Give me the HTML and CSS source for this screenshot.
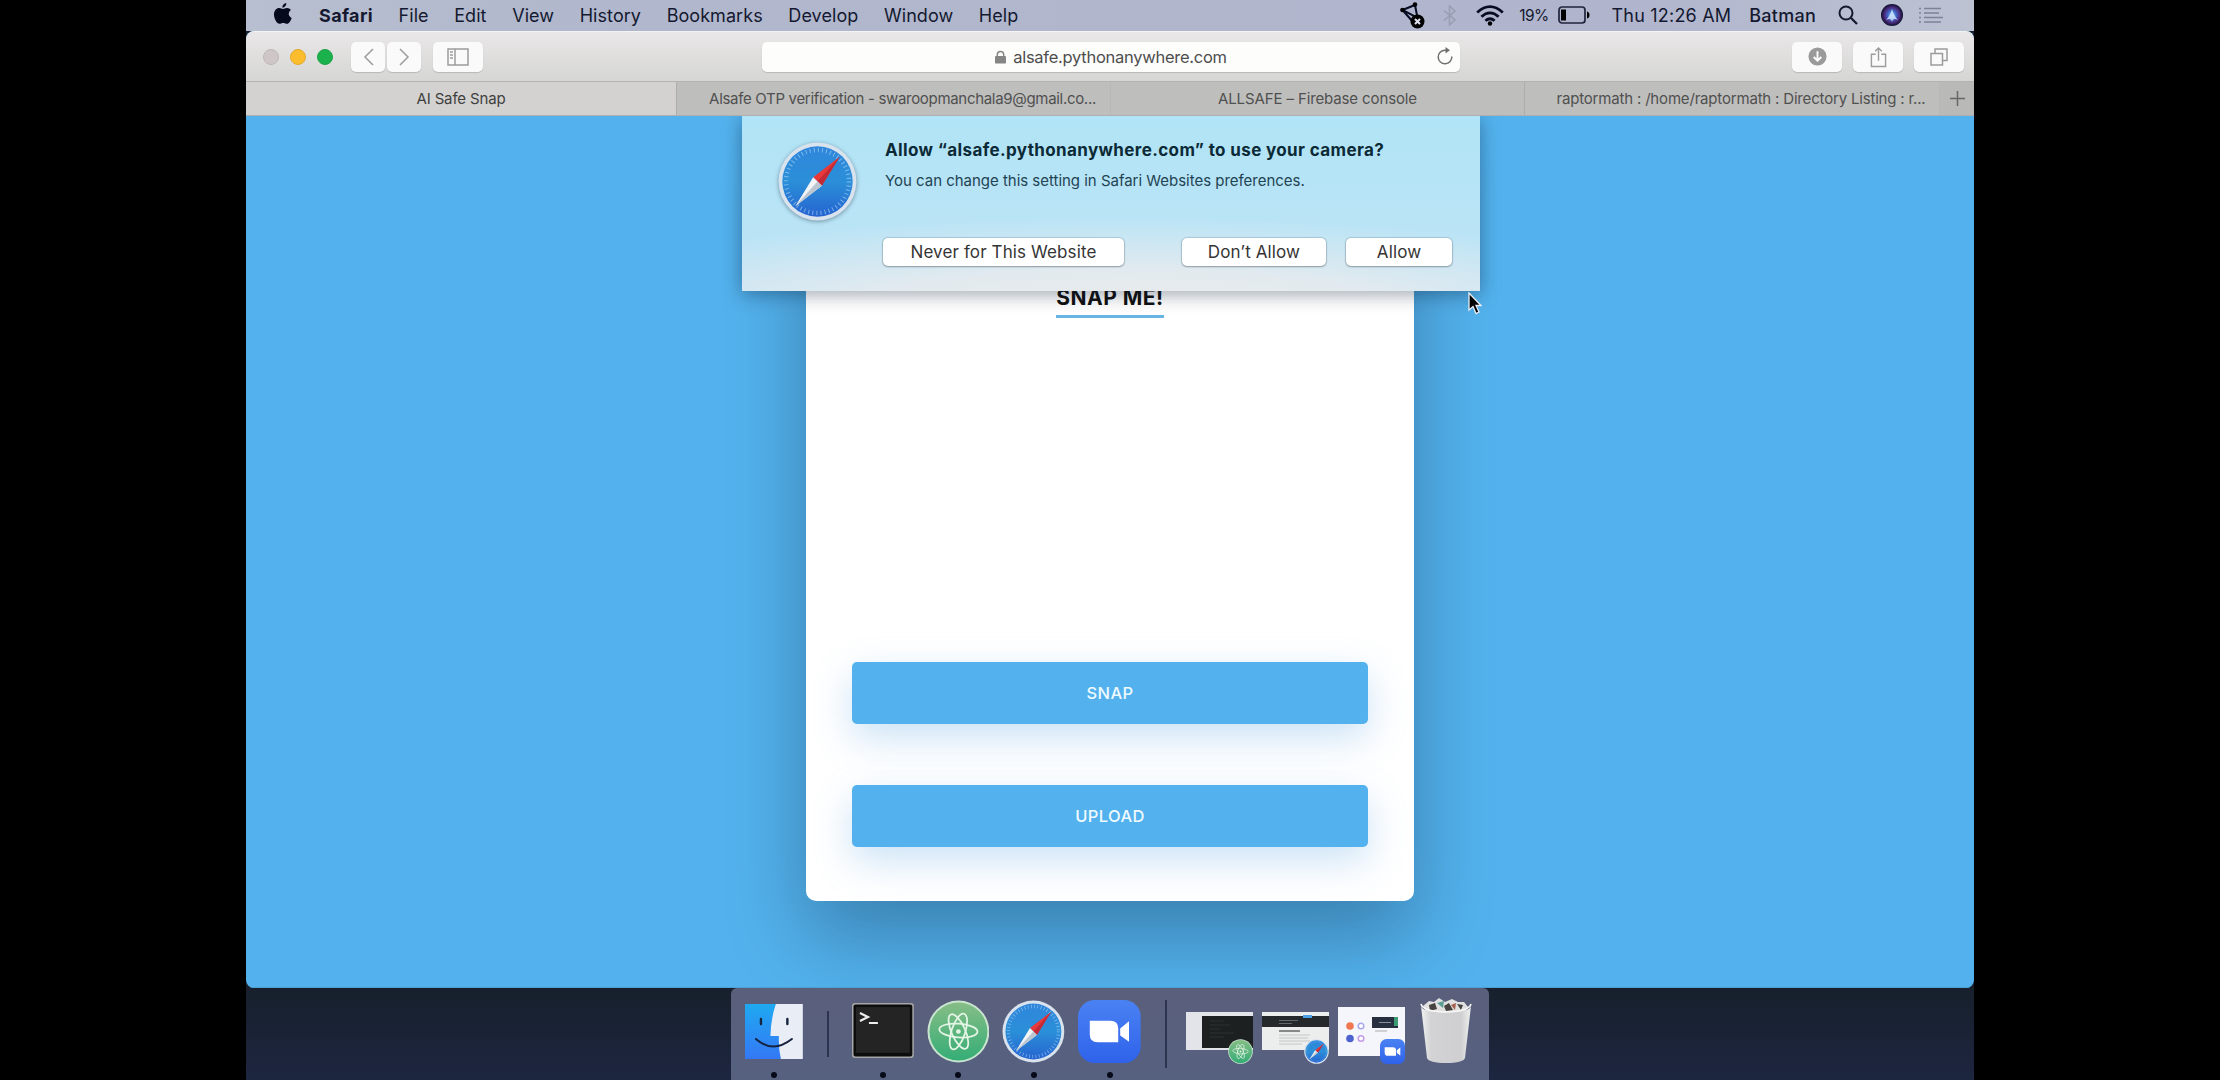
FILE: index.html
```html
<!DOCTYPE html>
<html lang="en">
<head>
<meta charset="utf-8">
<title>AI Safe Snap</title>
<link rel="stylesheet" href="styles.css">
</head>
<body>
<svg class="defs" width="0" height="0" aria-hidden="true">
  <defs>
    <linearGradient id="sky" x1="0" y1="0" x2="0" y2="1"><stop offset="0" stop-color="#2f86dc"/><stop offset=".5" stop-color="#2b8fd8"/><stop offset="1" stop-color="#2563d0"/></linearGradient>
    <linearGradient id="leaf" x1="0" y1="0" x2="0" y2="1"><stop offset="0" stop-color="#86bd86"/><stop offset="1" stop-color="#35ad76"/></linearGradient>
    <linearGradient id="faceBlue" x1="0" y1="0" x2="0" y2="1"><stop offset="0" stop-color="#1fa9f1"/><stop offset="1" stop-color="#3478f5"/></linearGradient>
    <linearGradient id="zoomBlue" x1="0" y1="0" x2="0" y2="1"><stop offset="0" stop-color="#4a82f3"/><stop offset="1" stop-color="#2f62ea"/></linearGradient>
    <linearGradient id="bin" x1="0" y1="0" x2="1" y2="0"><stop offset="0" stop-color="#f2f2f2"/><stop offset=".2" stop-color="#d3d3d5"/><stop offset=".8" stop-color="#cfcfd1"/><stop offset="1" stop-color="#f0f0f0"/></linearGradient>
    <radialGradient id="siri"><stop offset="0" stop-color="#7fc4f0"/><stop offset=".4" stop-color="#3f63c4"/><stop offset=".7" stop-color="#4b2a7c"/><stop offset="1" stop-color="#0c0f2b"/></radialGradient>
    <symbol id="compass" viewBox="0 0 64 64">
      <circle cx="32" cy="32" r="31.5" fill="#d9e3ee"/>
      <circle cx="32" cy="32" r="28.5" fill="url(#sky)"/>
      <circle cx="32" cy="32" r="25.5" fill="none" stroke="#a9d4f5" stroke-width="3.5" stroke-dasharray=".8 2.54" opacity=".65"/>
      <path d="M50 12 35.5 35.5 28.5 28.5Z" fill="#e8383a"/>
      <path d="M50 12 35.5 35.5 32 32Z" fill="#c22a36"/>
      <path d="M14 52 28.5 28.5 35.5 35.5Z" fill="#f2f4f6"/>
      <path d="M14 52 32 32 35.5 35.5Z" fill="#bcc6d0"/>
    </symbol>
    <symbol id="atom" viewBox="0 0 64 64">
      <circle cx="32" cy="32" r="31.5" fill="#c9e5cf"/><circle cx="32" cy="32" r="29.5" fill="url(#leaf)"/>
      <g fill="none" stroke="#e4f5e6" stroke-width="1.8">
        <ellipse cx="32" cy="31" rx="19.5" ry="7" transform="rotate(4 32 31)"/>
        <ellipse cx="32" cy="32" rx="19" ry="7" transform="rotate(66 32 32)"/>
        <ellipse cx="32" cy="32" rx="19" ry="7" transform="rotate(-72 32 32)"/>
      </g><circle cx="32" cy="32" r="2.4" fill="#e4f5e6"/>
    </symbol>
    <symbol id="meet" viewBox="0 0 64 64">
      <rect width="64" height="64" rx="17" fill="url(#zoomBlue)"/>
      <path d="M12 21H33Q41 21 41 29V43H20Q12 43 12 35ZM43 29 52 21.500V42.500L43 36Z" fill="#fff"/>
    </symbol>
  </defs>
</svg>
<div class="screen">
  <header class="menubar">
    <svg class="apple" viewBox="0 0 18 21"><path d="M12.300 0C12.500 2.500 10.500 4.800 8.400 4.700 8.200 2.400 10.200.2 12.300 0ZM9 5.900C10 5.900 11 4.900 13 4.900 14.600 4.900 16 5.700 17 7 13.700 9 14.200 13.500 17.700 14.900 16.800 17.600 14.900 20.700 13 20.800 11.600 20.800 11 20 9.200 20 7.400 20 6.700 20.800 5.500 20.800 2.800 20.800 0 15.500 0 11.500 0 7.400 2.500 5 5.200 5 6.800 5 8 5.900 9 5.900Z"/></svg>
    <nav class="menus">
      <b>Safari</b><span>File</span><span>Edit</span><span>View</span><span>History</span><span>Bookmarks</span><span>Develop</span><span>Window</span><span>Help</span>
    </nav>
    <div class="status">
      <svg class="st-net" viewBox="0 0 25 27"><path d="M2.500 8 15 3 17.500 16ZM2.500 8 13 20" fill="none" stroke="#080c22" stroke-width="2"/><circle cx="2.500" cy="8" r="2.300"/><circle cx="15" cy="2.500" r="2.300"/><circle cx="17.500" cy="19.500" r="7"/><path d="M15 17 20 22M20 17 15 22" stroke="#dfe2ee" stroke-width="2"/></svg>
      <svg class="st-bt" viewBox="0 0 13 21"><path d="M1 5.500 12 15 6.500 20V1L12 6 1 15.500" fill="none" stroke="#979db2" stroke-width="1.500"/></svg>
      <svg class="st-wifi" viewBox="0 0 28 21"><g fill="none" stroke="#080c22" stroke-width="2.800"><path d="M1.200 7.500Q14-4.200 26.800 7.500"/><path d="M5.400 11.800Q14 4 22.600 11.800"/><path d="M9.400 15.800Q14 11.700 18.600 15.800"/></g><circle cx="14" cy="18.500" r="2.200"/></svg>
      <span class="pct">19%</span>
      <svg class="st-bat" viewBox="0 0 32 18"><rect x="1" y="1" width="26" height="16" rx="3" fill="none" stroke="#20253b" stroke-width="1.700"/><rect x="3" y="3.500" width="5" height="11"/><path d="M29 5.500Q31.500 6 31.500 9T29 12.500Z"/></svg>
      <span class="clock">Thu 12:26 AM</span>
      <span class="user">Batman</span>
      <svg class="st-find" viewBox="0 0 20 20"><circle cx="8" cy="8" r="6.500" fill="none" stroke="#151a30" stroke-width="2"/><path d="M12.800 12.800 19 19" stroke="#151a30" stroke-width="2.300"/></svg>
      <svg class="st-siri" viewBox="0 0 22 22"><circle cx="11" cy="11" r="11" fill="url(#siri)"/><path d="M5 16Q9 12 11 5 13 12 17 16 12 13 11 18 10 13 5 16" fill="#d7e9ff" opacity=".8"/></svg>
      <svg class="st-list" viewBox="0 0 24 16"><path d="M0 1.500H2M5 1.500H22M0 6H2M5 6H20M0 10.500H2M5 10.500H24M0 15H2M5 15H22" stroke="#7c8297" stroke-width="1.700"/></svg>
    </div>
  </header>
  <main class="window">
    <div class="toolbar">
      <div class="lights"><i></i><i class="amber"></i><i class="green"></i></div>
      <div class="history">
        <button class="tb nav"><svg width="11" height="18" viewBox="0 0 11 18"><path d="M10 1 2 9 10 17"/></svg></button>
        <button class="tb nav"><svg width="11" height="18" viewBox="0 0 11 18"><path d="M1 1 9 9 1 17"/></svg></button>
      </div>
      <button class="tb side"><svg width="22" height="18" viewBox="0 0 22 18"><path d="M1 1H21V17H1ZM8 1V17M3 4H6M3 7H6M3 10H6"/></svg></button>
      <div class="url">
        <svg class="lock" viewBox="0 0 12 14"><rect y="6" width="12" height="8" rx="1" fill="#858585"/><path d="M2.500 7V4.500A3.500 3.500 0 0 1 9.500 4.500V7" fill="none" stroke="#858585" stroke-width="1.600"/></svg>
        <span>alsafe.pythonanywhere.com</span>
        <svg class="reload" viewBox="0 0 16 18"><path d="M14.800 9.500A6.800 6.800 0 1 1 8 3.200H11" fill="none" stroke="#717171" stroke-width="1.500"/><path d="M8.500 0 13 3.300 8.500 6.600Z" fill="#717171"/></svg>
      </div>
      <div class="actions">
        <button class="tb"><svg width="19" height="19" viewBox="0 0 20 20"><circle cx="10" cy="10" r="9.500" fill="#9a9a9a" stroke="none"/><path class="arrow" d="M10 4.500V14M6 10.500 10 14.500 14 10.500"/></svg></button>
        <button class="tb"><svg width="17" height="22" viewBox="0 0 18 22"><path d="M6 8H1.500V21H16.500V8H12M9 15V1.500M5.500 5 9 1.500 12.500 5"/></svg></button>
        <button class="tb"><svg width="18" height="18" viewBox="0 0 18 18"><path d="M1 5.500H12.500V17H1ZM5 5V1H17V12.500H13"/></svg></button>
      </div>
    </div>
    <div class="tabs">
      <div class="tab active">AI Safe Snap</div>
      <div class="tab mail">Alsafe OTP verification - swaroopmanchala9@gmail.co...</div>
      <div class="tab fire">ALLSAFE – Firebase console</div>
      <div class="tab dir">raptormath : /home/raptormath : Directory Listing : r...</div>
      <div class="newtab"><svg width="15" height="15" viewBox="0 0 15 15"><path d="M7.500 0V15M0 7.500H15" stroke="#666" stroke-width="1.500"/></svg></div>
    </div>
    <div class="page">
      <section class="card">
        <h1>SNAP ME!</h1>
        <button class="cta">SNAP</button>
        <button class="cta">UPLOAD</button>
      </section>
      <aside class="sheet">
        <svg class="sheet-icon"><use href="#compass"/></svg>
        <div class="sheet-body">
          <h2>Allow “alsafe.pythonanywhere.com” to use your camera?</h2>
          <p>You can change this setting in Safari Websites preferences.</p>
          <div class="choices">
            <button class="never">Never for This Website</button>
            <button class="deny">Don’t Allow</button>
            <button class="allow">Allow</button>
          </div>
        </div>
      </aside>
    </div>
  </main>
  <footer class="dock">
    <div class="app finder on"><svg viewBox="0 0 58 55"><path d="M0 0H58V55H0Z" fill="#e9edf5"/><path d="M0 0H31Q26 14 25.500 32H34Q33.500 45 36 55H0Z" fill="url(#faceBlue)"/><path d="M16 15V20M42.500 15V20" stroke="#15233f" stroke-width="2.400" stroke-linecap="round"/><path d="M11 35Q28 50 47 35" fill="none" stroke="#15233f" stroke-width="2" stroke-linecap="round"/></svg></div>
    <i class="rule short"></i>
    <div class="app term on"><svg viewBox="0 0 62 55"><rect width="62" height="55" rx="3" fill="#a7a6a6"/><rect x="1.500" y="1.500" width="59" height="52" rx="2" fill="#0d0d0d"/><rect x="4" y="4" width="54" height="46" fill="#242424"/><path d="M8 10 16 14 8 18M17 20H26" fill="none" stroke="#eee" stroke-width="2.200"/></svg></div>
    <div class="app disc on"><svg><use href="#atom"/></svg></div>
    <div class="app disc on"><svg><use href="#compass"/></svg></div>
    <div class="app disc on"><svg><use href="#meet"/></svg></div>
    <i class="rule tall"></i>
    <div class="thumb"><svg viewBox="0 0 67 38"><path d="M0 0H67V38H0Z" fill="#e3e4ea"/><path d="M16 4H67V36H16Z" fill="#1d2021"/><path d="M24 9H38M24 13H44M24 17H34M24 21H48M24 25H38" stroke="#2b3031"/></svg><svg class="badge"><use href="#atom"/></svg></div>
    <div class="thumb"><svg viewBox="0 0 67 38"><path d="M0 0H67V38H0Z" fill="#eceded"/><path d="M0 4H67V15H0Z" fill="#26292c"/><path d="M41 3H50V6H41Z" fill="#4aa1e6"/><path d="M17 8.500H36M17 11.500H30" stroke="#63666a"/><path d="M17 19H38" stroke="#666" stroke-width="1.500"/><path d="M17 23H48M17 26H46M17 29H48M17 32H40" stroke="#c6c6c6"/></svg><svg class="badge"><use href="#compass"/></svg></div>
    <div class="thumb big"><svg viewBox="0 0 67 49"><path d="M0 0H67V49H0Z" fill="#f5f6fc"/><circle cx="12" cy="19" r="3.800" fill="#ef7850"/><circle cx="23" cy="19" r="2.800" fill="#fff" stroke="#a7a9ec" stroke-width="1.500"/><circle cx="12" cy="31.500" r="3.800" fill="#4b62cf"/><circle cx="23" cy="31.500" r="2.800" fill="#fff" stroke="#c39be8" stroke-width="1.500"/><path d="M34 10H60V21H34Z" fill="#263041"/><path d="M56 10H60V19H56Z" fill="#3b9b72"/><path d="M41 15.500H53" stroke="#8791a0"/><path d="M37 24H49" stroke="#aaa"/></svg><svg class="badge sq"><use href="#meet"/></svg></div>
    <svg class="trash" viewBox="0 0 52 67"><path d="M3 9 9 4 14 5 19 1 25 5 32 2 38 5 44 5 48 10 44 17H8Z" fill="#dfe0df"/><path d="M9 8 15 6 17 12 10 14ZM24 9 29 6 33 13 26 14ZM37 7 43 8 41 13Z" fill="#47413f"/><path d="M17 6 24 4 23 11Z" fill="#5b9c94"/><path d="M31 8 36 6 35 13Z" fill="#a55d4e"/><path d="M1 9Q2 15 26 15.500 50 15 51 9L45 61Q43 66 26 66T7 61Z" fill="url(#bin)"/><path d="M1 7Q3 14.500 26 15 49 14.500 51 7" fill="none" stroke="#f7f7f7" stroke-width="1.600"/></svg>
  </footer>
  <svg class="pointer" viewBox="0 0 14 23"><path d="M1 1V18L5 14.500 8 21.500 11 20 8 13.500H13Z" fill="#050505" stroke="#e8eef4" stroke-width="1.300"/></svg>
</div>
</body>
</html>
```
FILE: styles.css
```css
* { box-sizing: border-box; }
body { margin: 0; background: #000; font-family: Inter, "Liberation Sans", sans-serif; display: flex; justify-content: center; height: 1080px; overflow: hidden; }
.defs { position: absolute; }
svg { display: block; flex: none; }
button { border: 0; padding: 0; font: inherit; letter-spacing: inherit; display: flex; align-items: center; justify-content: center; white-space: nowrap; }
span, b, h2, p { white-space: nowrap; }

.screen { position: relative; width: 1728px; height: 1080px; display: flex; flex-direction: column; background: linear-gradient(#17202c 0, #17202c 990px, #1d2640 1080px); }

.menubar { height: 31px; flex: none; display: flex; align-items: center; padding: 0 31px 1px 28px; background: linear-gradient(90deg, #b7bfd0, #b1b7cc 20%, #b0b5cd 80%, #bcc2d2); color: #141930; font-size: 18px; }
.apple { width: 18px; height: 21px; margin-top: -3px; fill: #050a1c; }
.menus { display: flex; gap: 25.600px; margin-left: 27px; letter-spacing: .06px; }
.menus b { letter-spacing: .35px; }
.status { display: flex; align-items: center; margin-left: auto; }
.st-net { width: 25px; height: 27px; }
.st-bt { width: 13px; height: 21px; margin-left: 18px; }
.st-wifi { width: 28px; height: 21px; margin: 0 15px 0 20px; }
.pct { font-size: 15.500px; letter-spacing: -.6px; }
.st-bat { width: 32px; height: 18px; margin: 0 22px 0 9px; }
.clock { letter-spacing: .2px; }
.user { margin-left: 18px; font-weight: 500; letter-spacing: .25px; }
.st-find { width: 20px; height: 20px; margin-left: 22px; }
.st-siri { width: 22px; height: 22px; margin: 0 16px 0 23px; }
.st-list { width: 24px; height: 16px; }

.window { height: 957px; flex: none; display: flex; flex-direction: column; border-radius: 8px; overflow: hidden; background: #53b2ed; }
.toolbar { height: 51px; flex: none; display: flex; align-items: center; padding: 0 10px 0 17px; background: linear-gradient(#e9e7e7, #d6d6d5); border-top: 1px solid #f3f3f3; border-bottom: 1px solid #b3b3b2; }
.lights { display: flex; gap: 11px; }
.lights i { width: 16px; height: 16px; border-radius: 50%; background: #cfc6c7; border: 1px solid #bfb7b8; }
.lights .amber { background: #fbbd2e; border-color: #e4a92c; }
.lights .green { background: #1bb14c; border-color: #1da448; }
.history { display: flex; gap: 2px; margin-left: 18px; }
.tb { width: 50px; height: 30px; background: #fafafa; border-radius: 5px; box-shadow: 0 1px 1px #b9b9b9; }
.tb svg { fill: none; stroke: #9c9c9c; stroke-width: 1.500; }
.tb .arrow { stroke: #fff; stroke-width: 2; }
.tb.nav { width: 34px; }
.side { margin-left: 12px; }
.url { position: relative; width: 698px; height: 30px; margin-left: 279px; display: flex; align-items: center; justify-content: center; gap: 7px; background: #fdfdfc; border-radius: 5px; box-shadow: 0 1px 1px #b9b9b9; font-size: 16.500px; letter-spacing: -.27px; color: #4e4e4e; }
.lock { width: 11px; height: 14px; }
.reload { position: absolute; right: 7px; top: 5px; width: 16px; height: 18px; }
.actions { display: flex; gap: 11px; margin-left: auto; }

.tabs { height: 34px; flex: none; display: flex; background: #bebebc; border-bottom: 1px solid #aeb0b0; font-size: 15px; color: #505050; }
.tab { display: flex; align-items: center; justify-content: center; border-right: 1px solid #adadab; white-space: nowrap; }
.active { width: 431px; background: #d3d2d0; color: #3f3f3f; letter-spacing: -.15px; }
.mail { width: 434px; border-color: #b8b8b6; padding-left: 18px; letter-spacing: -.31px; }
.fire { width: 414px; letter-spacing: -.12px; }
.dir { width: 414px; border: 0; padding-left: 18px; letter-spacing: -.18px; }
.newtab { flex: 1; display: flex; align-items: center; justify-content: center; background: #b9b9b7; padding-left: 2px; }

.page { position: relative; flex: 1; display: flex; justify-content: center; align-items: flex-start; overflow: hidden; border-bottom: 1px solid #4a9fd5; }
.card { width: 608px; height: 785px; padding: 0 46px 54px; display: flex; flex-direction: column; align-items: center; background: #fff; border-radius: 0 0 10px 10px; box-shadow: 0 36px 80px rgba(0, 20, 40, .31); }
.card h1 { margin: 168px 0 auto; height: 34px; line-height: 28px; font-size: 21px; font-weight: 700; letter-spacing: .5px; color: #111; border-bottom: 3px solid #68b4e2; }
.cta { width: 516px; height: 62px; flex: none; border-radius: 5px; background: #53b2ed; color: #effaff; font-size: 16.500px; font-weight: 500; letter-spacing: .4px; box-shadow: 0 14px 38px rgba(83, 160, 225, .3); }
.cta + .cta { margin-top: 61px; }

.sheet { position: absolute; left: 496px; top: 0; width: 738px; height: 175px; display: flex; padding: 20px 27px 0 36px; background: radial-gradient(ellipse 620px 100px at 52% 115%, #ebebeb 0, rgba(231, 235, 238, .9) 45%, rgba(200, 230, 244, 0) 100%), linear-gradient(#b0e4f6, #bfe4f6); box-shadow: 0 3px 18px rgba(0, 25, 50, .4); }
.sheet-icon { width: 79px; height: 79px; margin-top: 6px; filter: drop-shadow(0 1px 2px rgba(40, 60, 80, .5)); }
.sheet-body { flex: 1; margin-left: 26px; }
.sheet h2 { margin: 1px 0 0 2px; font-size: 17px; line-height: 26px; font-weight: 700; letter-spacing: .37px; color: #0b2a36; }
.sheet p { margin: 7px 0 0 2px; font-size: 15px; line-height: 22px; letter-spacing: -.02px; color: #1f4353; }
.choices { display: flex; margin-top: 46px; letter-spacing: .12px; }
.choices button { height: 28px; background: #fff; border-radius: 5px; box-shadow: 0 0 1px 1px rgba(0, 40, 70, .15), 0 1px 2px rgba(0, 0, 0, .25); font-size: 17px; color: #353535; }
.never { width: 241px; }
.deny { width: 144px; margin-left: 58px; }
.allow { width: 106px; margin-left: 20px; }

.dock { align-self: center; width: 758px; height: 92px; display: flex; align-items: flex-start; padding: 0 17px 0 14px; background: linear-gradient(#5a5f7b, #566180); border-radius: 6px 6px 0 0; }
.app { position: relative; height: 92px; }
.app svg { width: 100%; }
.on::after { content: ""; position: absolute; left: 50%; top: 84px; width: 6px; height: 6px; margin-left: -3px; border-radius: 50%; background: #060a18; }
.finder { width: 58px; padding-top: 16px; }
.finder svg { height: 55px; }
.term { width: 62px; padding-top: 15px; }
.term svg { height: 55px; }
.disc { width: 63px; padding-top: 12px; margin-left: 13px; }
.disc svg { height: 63px; }
.rule { width: 2px; background: #2d3450; }
.short { height: 46px; margin: 23px 23px 0 24px; }
.tall { height: 68px; margin: 12px 19px 0 24px; }
.thumb { position: relative; width: 67px; margin: 24px 9px 0 0; }
.thumb > svg:first-child { width: 67px; height: 38px; }
.thumb.big { margin: 19px 15px 0 0; }
.thumb.big > svg:first-child { height: 49px; }
.thumb .badge { position: absolute; right: 0; bottom: -14px; width: 25px; height: 25px; }
.thumb .sq { bottom: -8px; }
.trash { width: 52px; height: 67px; margin-top: 9px; }

.pointer { position: absolute; left: 1222px; top: 292px; width: 14px; height: 23px; }
```
